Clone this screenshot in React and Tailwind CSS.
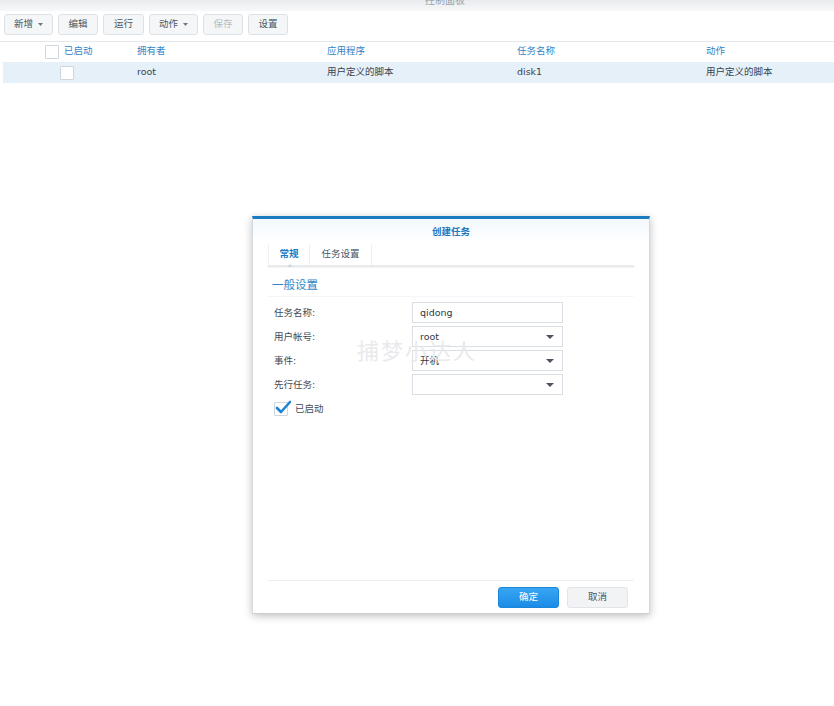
import React from 'react';

const font = { fontFamily: '"DejaVu Sans", "Noto Sans CJK SC", sans-serif' };

const Caret = () => (
  <svg width="5" height="3" viewBox="0 0 5 3" className="ml-[5px]">
    <path d="M0 0H5L2.5 3Z" fill="#6b7785" />
  </svg>
);

const SelectArrow = () => (
  <svg width="8" height="4" viewBox="0 0 8 4">
    <path d="M0 0H8L4 4Z" fill="#4a5561" />
  </svg>
);

const ToolButton = ({ label, caret, disabled, width }) => (
  <div
    className={`flex items-center justify-center h-[21px] rounded-[3px] border border-[#dde2e8] bg-[#f4f6f8] text-[9.5px] ${width} ${
      disabled ? 'text-[#b4bcc4]' : 'text-[#4b5663]'
    }`}
  >
    {label}
    {caret && <Caret />}
  </div>
);

const Field = ({ label, value, select }) => (
  <div className="flex items-center h-[21px]">
    <div className="w-[138px] text-[9.5px] text-[#414b55]">{label}</div>
    <div className="flex items-center justify-between w-[151px] h-[21px] border border-[#d9dfe5] bg-white pl-[7px] pr-[8px] text-[9.5px] text-[#303a44]">
      <span>{value}</span>
      {select && <SelectArrow />}
    </div>
  </div>
);

export default function App() {
  const columns = ['已启动', '拥有者', '应用程序', '任务名称', '动作'];

  return (
    <div className="relative w-[834px] min-h-[706px] bg-white overflow-hidden" style={font}>
      {/* Window title bar, cut off at the top */}
      <div className="h-[11px] overflow-hidden bg-gradient-to-b from-[#e9ecef] to-[#f7f8f9] flex justify-center">
        <span className="-mt-[7px] ml-[56px] text-[10px] text-[#9aa3ad]">控制面板</span>
      </div>

      {/* Toolbar */}
      <div className="flex items-start gap-[5px] pl-[4px] pt-[3px] h-[31px] border-b border-[#e6e9ec]">
        <ToolButton label="新增" caret width="w-[49px]" />
        <ToolButton label="编辑" width="w-[40px]" />
        <ToolButton label="运行" width="w-[41px]" />
        <ToolButton label="动作" caret width="w-[49px]" />
        <ToolButton label="保存" disabled width="w-[40px]" />
        <ToolButton label="设置" width="w-[40px]" />
      </div>

      {/* Table header */}
      <div className="flex items-center h-[19px] text-[9.5px] text-[#2f86c8]">
        <div className="w-[45px]" />
        <div className="w-[14px] h-[14px] border border-[#cfd6dd] bg-white rounded-[1px]" />
        <div className="w-[78px] pl-[5px]">{columns[0]}</div>
        <div className="w-[190px]">{columns[1]}</div>
        <div className="w-[190px]">{columns[2]}</div>
        <div className="w-[189px]">{columns[3]}</div>
        <div>{columns[4]}</div>
      </div>

      {/* Table row */}
      <div className="flex items-center h-[21px] ml-[3px] mt-[1px] bg-[#e5f0f9] text-[9.5px] text-[#3a434d]">
        <div className="w-[57px]" />
        <div className="w-[14px] h-[14px] border border-[#cfd6dd] bg-white rounded-[1px]" />
        <div className="w-[63px]" />
        <div className="w-[190px]">root</div>
        <div className="w-[190px]">用户定义的脚本</div>
        <div className="w-[189px]">disk1</div>
        <div>用户定义的脚本</div>
      </div>

      {/* Dialog */}
      <div className="ml-[252px] mt-[133px] w-[398px] h-[398px] flex flex-col bg-white border-t-[3px] border-[#1a7bc0] border-x border-b border-x-[#d4d9de] border-b-[#c9cfd5] shadow-[0_2px_8px_rgba(0,0,0,0.25)]">
        <div className="h-[25px] flex items-center justify-center pt-[1px] bg-gradient-to-b from-[#f2f8fd] to-white text-[9.5px] font-bold text-[#2178bf]">
          创建任务
        </div>

        <div className="flex-1 flex flex-col px-[15px]">
          {/* Tabs */}
          <div className="relative flex h-[23px] border-b-2 border-[#e8ebee] shadow-[0_1px_1px_rgba(0,0,0,0.04)]">
            <div className="relative flex items-center justify-center w-[42px] border-x border-[#edf0f2] text-[9.5px] font-bold text-[#2178bf]">
              常规
              <div className="absolute -bottom-[2px] left-[18px] w-0 h-0 border-x-[3px] border-x-transparent border-b-[3px] border-b-[#d2d8de]" />
            </div>
            <div className="flex items-center justify-center w-[62px] border-r border-[#edf0f2] text-[9.5px] text-[#4b5663]">
              任务设置
            </div>
          </div>

          {/* Section title */}
          <div className="mt-[9px] pl-[4px] pb-[3px] border-b border-[#f5f6f7] text-[11.5px] text-[#2f86c8]" style={{ fontFamily: '"Noto Sans CJK SC", sans-serif' }}>
            一般设置
          </div>

          {/* Form */}
          <div className="relative flex flex-col gap-[3px] mt-[5px] pl-[6px]">
            <Field label="任务名称:" value="qidong" />
            <Field label="用户帐号:" value="root" select />
            <Field label="事件:" value="开机" select />
            <Field label="先行任务:" value="" select />
            <div className="flex items-center mt-[2px] h-[18px]">
              <div className="relative w-[14px] h-[14px] border border-[#cfd6dd] bg-white rounded-[1px]">
                <svg width="16" height="14" viewBox="0 0 16 14" className="absolute -top-[3px] left-[0px]">
                  <path d="M2 8L6 12L15 2" stroke="#1f83d0" strokeWidth="2.6" fill="none" strokeLinecap="round" strokeLinejoin="round" />
                </svg>
              </div>
              <span className="ml-[7px] text-[9.5px] text-[#414b55]">已启动</span>
            </div>
            {/* Watermark */}
            <div className="absolute left-[89px] top-[31px] text-[22px] text-[#e8eaec] tracking-[2px] pointer-events-none" style={{ fontFamily: '"Noto Sans CJK SC", sans-serif' }}>
              捕梦小达人
            </div>
          </div>

          <div className="flex-1" />

          {/* Footer */}
          <div className="flex justify-end items-center gap-[8px] h-[33px] border-t border-[#eceef0] pr-[6px]">
            <div className="flex items-center justify-center w-[61px] h-[21px] rounded-[3px] bg-gradient-to-b from-[#38a6f3] to-[#1b8be6] border border-[#1b85d9] text-[9.5px] text-white">
              确定
            </div>
            <div className="flex items-center justify-center w-[61px] h-[21px] rounded-[3px] bg-[#f1f3f5] border border-[#e1e5e9] text-[9.5px] text-[#4b5663]">
              取消
            </div>
          </div>
        </div>
      </div>
    </div>
  );
}
